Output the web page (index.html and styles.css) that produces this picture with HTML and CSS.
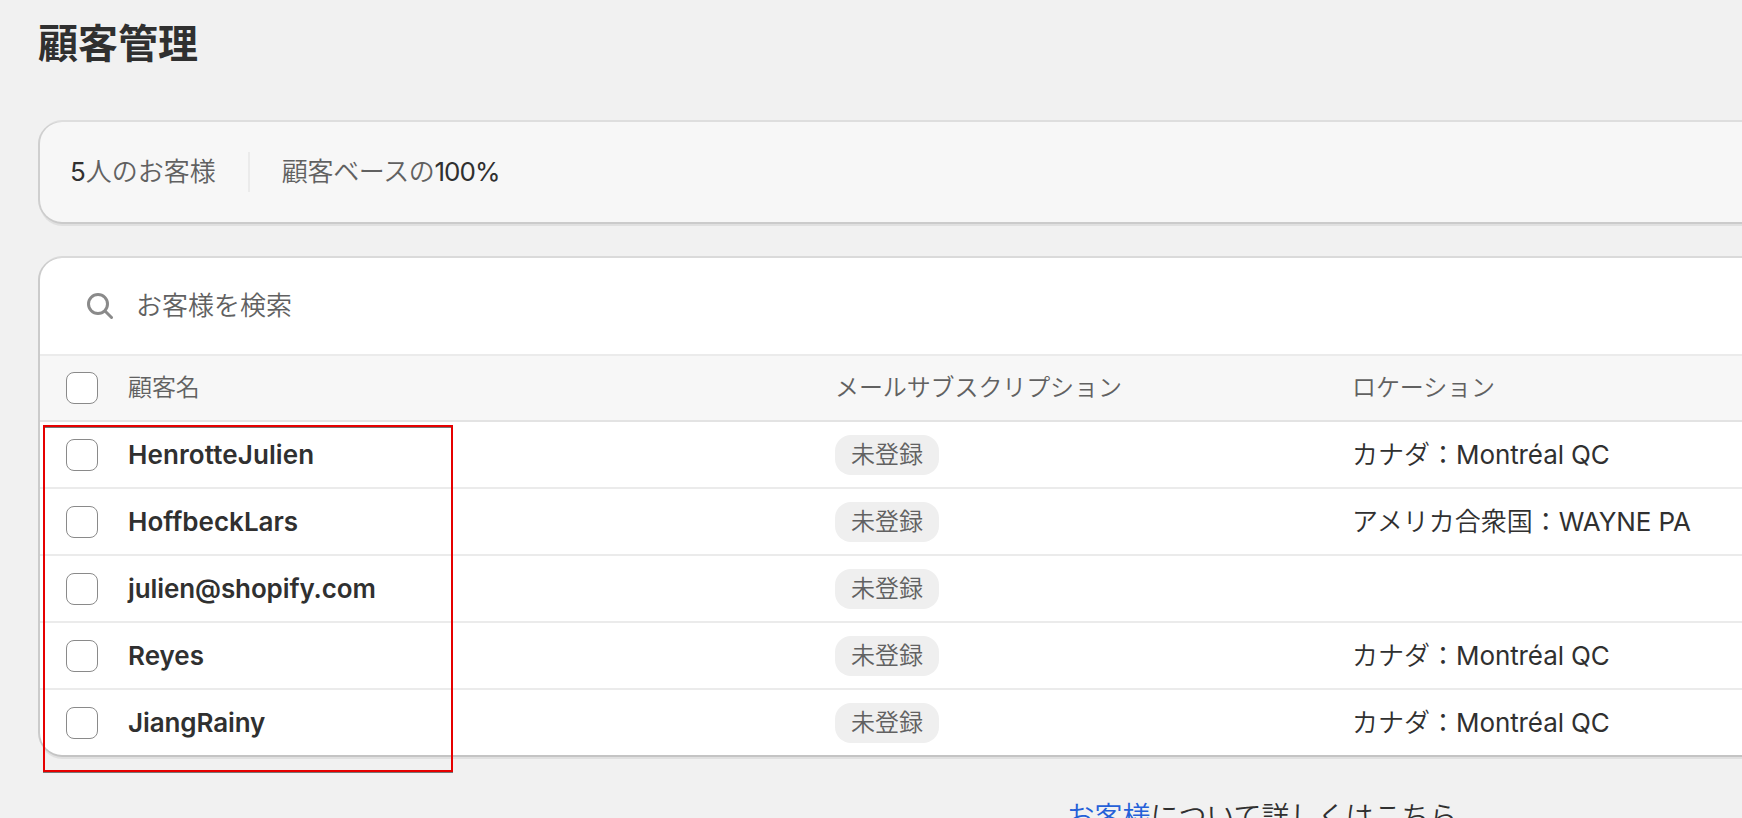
FILE: index.html
```html
<!DOCTYPE html>
<html lang="ja">
<head>
<meta charset="utf-8">
<title>顧客管理</title>
<link rel="stylesheet" href="styles.css">
</head>
<body>
<main class="page">
  <h1 class="title">顧客管理</h1>
  <section class="summary">
    <div class="stat"><span class="num">5</span>人のお客様</div>
    <div class="rule"></div>
    <div class="stat base">顧客ベースの<span class="num">100%</span></div>
  </section>
  <section class="card">
    <div class="search">
      <svg class="search-icon" viewBox="0 0 26 26" fill="none" stroke="#8a8a8a" stroke-width="3" stroke-linecap="round"><circle cx="11" cy="11" r="9.5"/><path d="M18 18l6.5 6.5"/></svg>
      <span>お客様を検索</span>
    </div>
    <div class="row head"><span class="check"></span><span>顧客名</span><span>メールサブスクリプション</span><span>ロケーション</span></div>
    <div class="row"><span class="check"></span><span class="name wide">HenrotteJulien</span><span class="badge">未登録</span><span class="place">カナダ：<span class="city">Montréal QC</span></span></div>
    <div class="row"><span class="check"></span><span class="name">HoffbeckLars</span><span class="badge">未登録</span><span class="place">アメリカ合衆国：<span class="city">WAYNE PA</span></span></div>
    <div class="row"><span class="check"></span><span class="name tight">julien@shopify.com</span><span class="badge">未登録</span><span></span></div>
    <div class="row"><span class="check"></span><span class="name">Reyes</span><span class="badge">未登録</span><span class="place">カナダ：<span class="city">Montréal QC</span></span></div>
    <div class="row"><span class="check"></span><span class="name tight">JiangRainy</span><span class="badge">未登録</span><span class="place">カナダ：<span class="city">Montréal QC</span></span></div>
    <div class="highlight"></div>
  </section>
  <footer class="help"><a class="link">お客様</a>について詳しくはこちら</footer>
</main>
</body>
</html>
```

FILE: styles.css
```css
* { box-sizing: border-box; }
html { overflow: hidden; }
body {
  margin: 0;
  height: 818px;
  overflow: hidden;
  background: #f1f1f1;
  color: #303030;
  font: 400 26px/40px Inter, "Noto Sans CJK JP", sans-serif;
}
.page { width: 2528px; padding: 20px 40px 0; }
.title { margin: 0 0 54px -2px; font-size: 40px; line-height: 48px; font-weight: 700; }
.summary, .card {
  border-radius: 22px;
  box-shadow: 0 2px 0 0 #cbcbcb, -2px 0 0 0 #cfcfcf, 0 -2px 0 0 #dedede, 0 4px 0 0 #e0e0e0;
}
.summary {
  display: flex;
  align-items: center;
  height: 100px;
  padding-left: 30px;
  background: #f7f7f7;
  color: #616161;
  font-weight: 350;
}
.num { color: #303030; font-weight: 400; }
.base { letter-spacing: -0.35px; }
.base .num { letter-spacing: -0.9px; }
.rule { width: 2px; height: 40px; margin: 0 32px; background: #ebebeb; }
.card { position: relative; margin-top: 36px; background: #fff; box-shadow: 0 2px 0 0 #c4c4c4, -2px 0 0 0 #cbcbcb, 0 -2px 0 0 #dadada, 0 4px 0 0 #e0e0e0; }
.search {
  display: flex;
  align-items: center;
  gap: 23px;
  height: 96px;
  padding-left: 47px;
  color: #616161;
  font-weight: 350;
}
.search-icon { width: 26px; height: 26px; }
.row {
  display: grid;
  grid-template-columns: 62px 707px 517px 1fr;
  align-items: center;
  height: 67px;
  padding-left: 26px;
  border-bottom: 2px solid #ebebeb;
}
.row:nth-last-child(2) { height: 65px; border-bottom: 0; }
.head {
  height: 68px;
  border-top: 2px solid #ebebeb;
  border-bottom-color: #e3e3e3;
  background: #f7f7f7;
  color: #616161;
  font-size: 24px;
  font-weight: 350;
  letter-spacing: -0.1px;
}
.check { width: 32px; height: 32px; border: 1.3px solid #8a8a8a; border-radius: 8px; background: #fff; }
.name { font-weight: 600; }
.wide { letter-spacing: 0.1px; }
.tight { letter-spacing: -0.1px; }
.place { font-weight: 350; }
.city { font-weight: 400; letter-spacing: -0.1px; }
.badge {
  justify-self: start;
  height: 40px;
  padding: 0 16px;
  border-radius: 16px;
  background: #efefef;
  color: #616161;
  font-size: 24px;
  font-weight: 350;
}
.highlight {
  position: absolute;
  left: 3px;
  top: 167px;
  width: 410px;
  height: 347px;
  border: 2px solid #e60000;
  box-shadow: 0 1px 0 #777, inset 0 1px 0 #777;
}
.help { margin: 42px 3px 0 0; padding-right: 1px; text-align: center; font-size: 28px; font-weight: 350; }
.link { color: #2560d8; }
```
